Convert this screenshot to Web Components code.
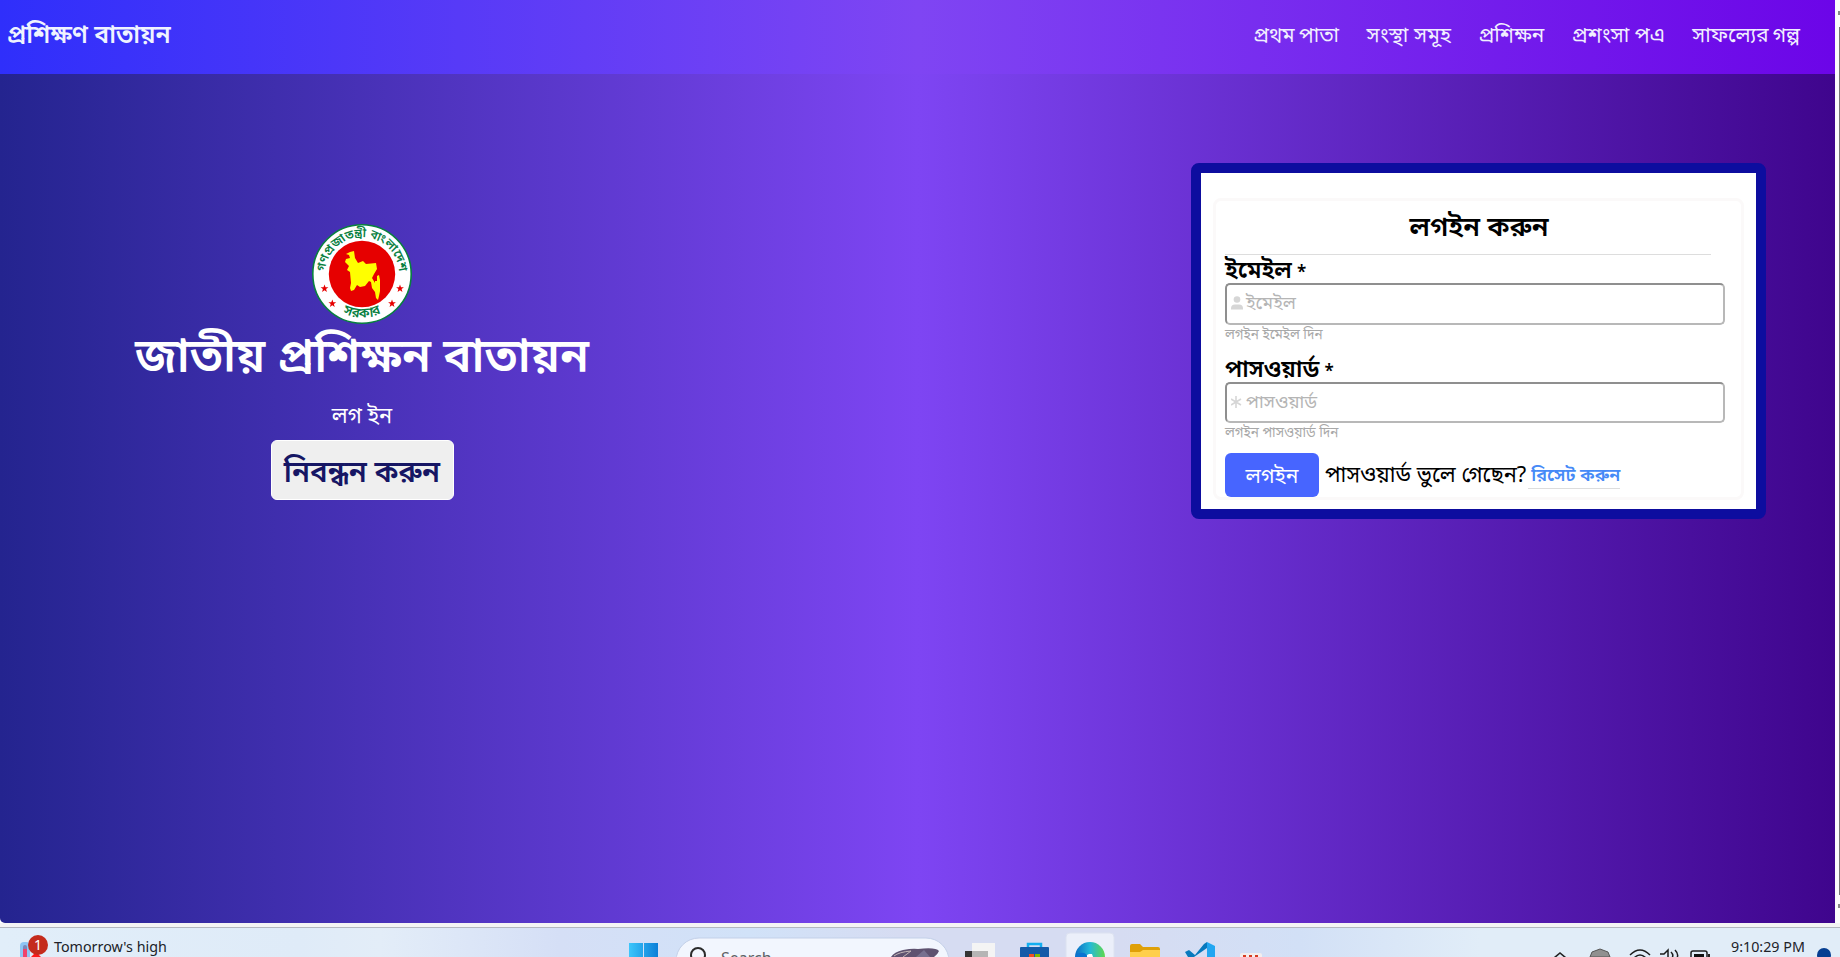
<!DOCTYPE html>
<html lang="bn"><head><meta charset="utf-8"><title>প্রশিক্ষণ বাতায়ন</title>
<style>
html,body{margin:0;height:100%;overflow:hidden}
body{font-family:"Noto Sans","Noto Sans Bengali","Open Sans",sans-serif;background:#fff}
</style></head><body>
<portal-shell>
  <portal-nav slot="nav"></portal-nav>
  <portal-hero slot="left"></portal-hero>
  <login-card slot="right"></login-card>
  <task-bar slot="taskbar"></task-bar>
</portal-shell>
<script>
function define(name, html){
  const t=document.createElement('template'); t.innerHTML=html;
  customElements.define(name, class extends HTMLElement{
    constructor(){super();this.attachShadow({mode:'open'}).append(t.content.cloneNode(true));}
  });
}

define('portal-shell', `<style>
:host{display:grid;grid-template:923px 34px / 1fr;width:1840px;height:957px;overflow:hidden}
.view{display:grid;grid-template-columns:1835px 5px;min-height:0}
.page{display:grid;grid-template-rows:74px 849px;border-bottom-left-radius:5px;overflow:hidden}
main{display:flex;justify-content:space-between;align-items:flex-start;background:linear-gradient(90deg,#24248f 0%,#7e45f3 50%,#3f058d 100%)}
.scroll{background:linear-gradient(#888,#888) 3px 11px/2px 4px no-repeat,linear-gradient(#888,#888) 3px 904px/2px 4px no-repeat,linear-gradient(#777,#777) 4px 27px/1px 868px no-repeat #fcfcfc}
</style><div class="view"><div class="page"><slot name="nav"></slot><main><slot name="left"></slot><slot name="right"></slot></main></div><div class="scroll"></div></div><slot name="taskbar"></slot>`);

define('nav-link', `<style>:host{display:block;font-size:var(--size,21px);line-height:30px;white-space:nowrap;color:#f1efff}</style><slot></slot>`);

define('portal-nav', `<style>
:host{display:flex;justify-content:space-between;height:74px;box-sizing:border-box;padding:19px 35px 0 7px;background:linear-gradient(90deg,#2f2ffb 0%,#7f45f3 50%,#6c05e8 100%)}
b{font-size:24.700px;font-weight:600;line-height:30px;color:#eff3ff;white-space:nowrap}
nav{display:flex;gap:27.500px}
.home{--size:20.500px;word-spacing:-1px}.train{--size:20.700px}.praise{--size:20.800px}.story{--size:20.700px;word-spacing:-1px}
</style><b>প্রশিক্ষণ বাতায়ন</b><nav><nav-link class="home">প্রথম পাতা</nav-link><nav-link>সংস্থা সমূহ</nav-link><nav-link class="train">প্রশিক্ষন</nav-link><nav-link class="praise">প্রশংসা পএ</nav-link><nav-link class="story">সাফল্যের গল্প</nav-link></nav>`);

define('gov-emblem', `<style>:host{display:block;width:100px;height:100px}svg{display:block;overflow:visible}text{font-family:"Noto Sans","Noto Sans Bengali",sans-serif;font-weight:600;fill:#08803f}</style>
<svg width="100" height="100" viewBox="0 0 100 100"><defs><path id="top" d="M13.200 54 A37 37 0 1 1 86.800 54"/><path id="bot" d="M22 83.300 A43.500 43.500 0 0 0 78 83.300"/></defs>
<circle cx="50" cy="50" r="49.200" fill="#fff" stroke="#08803f" stroke-width="1.600"/><circle cx="50" cy="50" r="33.200" fill="#e60000"/>
<path fill="#ff0" d="M38 28l4-1 1 7 3 5 5-2 3 3 10-1 1 6-3 5-2 4 3 5 0-2 2 0 0-5 2-1 1 5 0 11-1 5-1 4-2-2-1-6-3-4-1-6-2-1-4 5-5 1-3-2-3 5-3 1-1-3 1-5-1-11-3-2 2-4-4-4 1-3 4-1-1-3-3-1z"/>
<g fill="#e60000"><path d="M12.500 60.500l1 2.700 2.900.1-2.300 1.800.8 2.800-2.400-1.600-2.400 1.600.8-2.800-2.300-1.800 2.900-.1z"/><path d="M20.300 75.500l1 2.700 2.900.1-2.300 1.800.8 2.800-2.400-1.600-2.400 1.600.8-2.800-2.300-1.800 2.900-.1z"/><path d="M80 75.500l1 2.700 2.900.1-2.300 1.800.8 2.800-2.400-1.600-2.400 1.600.8-2.800-2.300-1.800 2.900-.1z"/><path d="M88 60.500l1 2.700 2.900.1-2.300 1.800.8 2.800-2.400-1.600-2.400 1.600.8-2.800-2.300-1.800 2.900-.1z"/></g>
<text font-size="12.200"><textPath href="#top" startOffset="50%" text-anchor="middle">গণপ্রজাতন্ত্রী বাংলাদেশ</textPath></text>
<text font-size="13.500"><textPath href="#bot" startOffset="50%" text-anchor="middle">সরকার</textPath></text></svg>`);

define('portal-hero', `<style>
:host{display:flex;flex-direction:column;align-items:center;width:724px;padding-top:150px;color:#fff;white-space:nowrap}
h1{margin:0;font-size:47.200px;font-weight:600;line-height:60px;height:60px}
p{margin:16px 0 0;font-size:21.800px;line-height:30px}
button{margin:10px 0 0;box-sizing:border-box;width:183px;height:60px;border:1px solid #fff;border-radius:6px;background:#efefef;color:#161664;font:600 29.400px/40px "Noto Sans","Noto Sans Bengali",sans-serif;padding:1px 0 0}
</style><gov-emblem></gov-emblem><h1>জাতীয় প্রশিক্ষন বাতায়ন</h1><p>লগ ইন</p><button>নিবন্ধন করুন</button>`);

define('form-field', `<style>
:host{display:block;width:500px}
label{display:block;font-weight:600;font-size:23.500px;word-spacing:-1px;line-height:28px;height:28px;color:#000;white-space:nowrap}
.box{display:flex;align-items:flex-start;box-sizing:border-box;height:var(--h,42px);border:2px solid;border-color:#8f8f8f #b8b8b8 #b8b8b8 #8f8f8f;border-radius:5px;padding:4px 0 0 4px;color:#b5b5b5;font-size:18px;line-height:26px;background:#fff}
small{display:block;font-size:13.500px;line-height:18px;height:18px;color:#a8a8a8;white-space:nowrap}
</style><label><slot name="label"></slot></label><div class="box"><slot name="icon"></slot><span><slot name="hint"></slot></span></div><small><slot></slot></small>`);

define('login-card', `<style>
:host{display:block;box-sizing:border-box;width:575px;height:356px;margin:89px 69px 0 0;border:10px solid #0d0d9f;border-radius:8px;background:#fff;padding:25px 12px 0}
.set{box-sizing:border-box;width:531px;height:302px;border:3px solid #fbf9f9;border-radius:8px;padding:0 0 0 9px}
h2{margin:0;width:486px;height:54px;box-sizing:border-box;padding:6px 0 0 22px;text-align:center;font-size:27.400px;font-weight:600;line-height:38px;border-bottom:1px solid #ddd;color:#000}
svg{display:block;margin:7px 3px 0 0}
i{font-style:normal;font-size:17px}
.row{display:flex;align-items:flex-start;white-space:nowrap;margin-top:12px}
button{width:94px;height:44px;border:0;border-radius:6px;background:#4765ff;color:#fff;font:21px/30px "Noto Sans","Noto Sans Bengali",sans-serif;padding:0}
.q{font-size:21.800px;line-height:30px;margin:6px 0 0 6px;color:#000}
a{margin:8px 0 0 2px;font-weight:600;font-size:18px;line-height:27px;color:#468af7;border-bottom:1px solid #ddd;padding-left:3px}
form-field+form-field{margin-top:11px;--h:41px}
</style><div class="set"><h2>লগইন করুন</h2>
<form-field><span slot="label">ইমেইল <i>*</i></span><svg slot="icon" width="12" height="14" fill="#d6d6d6"><circle cx="6" cy="3.500" r="3.300"/><path d="M0 13.500v-1q0-4 4-4h4q4 0 4 4v1z"/></svg><span slot="hint">ইমেইল</span>লগইন ইমেইল দিন</form-field>
<form-field><span slot="label">পাসওয়ার্ড <i>*</i></span><svg slot="icon" width="12" height="14" stroke="#d6d6d6" stroke-width="1.600"><path d="M5 1v12M0 4l10 6M0 10l10-6"/></svg><span slot="hint">পাসওয়ার্ড</span>লগইন পাসওয়ার্ড দিন</form-field>
<div class="row"><button>লগইন</button><span class="q">পাসওয়ার্ড ভুলে গেছেন?</span><a>রিসেট করুন</a></div></div>`);

define('task-bar', `<style>
:host{display:block;position:relative;height:34px;overflow:hidden;background:linear-gradient(#f4f4f4 0 4px,#b3b7bf 4px 5px,transparent 5px),linear-gradient(90deg,#e1eef9 0,#dfebf8 300px,#e3edf8 380px,#d5dff6 560px,#d1e2f8 750px,#d6dcf2 900px,#d6dcf2 1120px,#d2e0f6 1300px,#e1edf8 1480px,#e1edf8 100%)}
span,svg{position:absolute;white-space:nowrap}
svg{left:0;top:0}
span{font-family:"Noto Sans",sans-serif;color:#202228}
</style><svg width="1840" height="34"><defs><linearGradient id="w"><stop stop-color="#3cc6fb"/><stop offset="1" stop-color="#0b7fd8"/></linearGradient><linearGradient id="e"><stop stop-color="#0a6cc4"/><stop offset=".5" stop-color="#25b9d8"/><stop offset="1" stop-color="#5fd84d"/></linearGradient></defs>
<rect x="20" y="19" width="10" height="20" rx="4" fill="#8fc5f4"/><rect x="23" y="22" width="4" height="18" rx="2" fill="#7c87b8"/><rect x="23" y="26" width="4" height="10" fill="#f0436b"/><path d="M31 34l5-5 5 5z" fill="#ff1a1a"/><circle cx="38" cy="22" r="10" fill="#c42b1c"/>
<path d="M629 20h14v14h-14zM644 20h14v14h-14z" fill="url(#w)"/>
<rect x="676" y="15" width="273" height="46" rx="23" fill="#f2f6fe" stroke="#c3d0e8"/><circle cx="698" cy="32" r="7" fill="none" stroke="#2b2b2b" stroke-width="2"/>
<path d="M891 34q3-5 12-7 10-2 15-1 18-2 21 2-1 3-5 6z" fill="#5e5270"/><path d="M894 33q5-4 17-5l-8 6" fill="none" stroke="#c1b5b6"/><path d="M916 34l8-7 6 7z" fill="#77708f"/>
<rect x="965" y="28" width="23" height="6" fill="#353535"/><rect x="972" y="20" width="23" height="14" fill="#f4f4f4"/><rect x="972" y="28" width="16" height="6" fill="#b5b5b5"/>
<path d="M1028 25v-4h13v4" fill="none" stroke="#13aef0" stroke-width="2.500"/><rect x="1020" y="24" width="29" height="14" rx="1" fill="#145aa8"/><path d="M1029 31h5v3h-5z" fill="#f25022"/><path d="M1035 31h5v3h-5z" fill="#7fba00"/>
<rect x="1066" y="10" width="48" height="48" rx="4" fill="#ebeffa" stroke="#dce2f0"/><circle cx="1090" cy="34" r="15" fill="url(#e)"/><path d="M1075 34q2-5 9-4 3 1 3 4z" fill="#0b74d1"/><path d="M1087 34v-2l2-1h3l1 3z" fill="#fff"/>
<path d="M1130 34V23q0-2 2-2h8l3 3h15q2 0 2 2v8z" fill="#dfa008"/><path d="M1130 34v-5h10l3-2h17v7z" fill="#ffcf4b"/>
<path d="M1185 29l4-2 6 5 9-11 3-2v15h-19z" fill="#0879bd"/><path d="M1207 19l8 4v11h-8z" fill="#22a6f1"/><path d="M1194 34l13-9v9z" fill="#d5def5"/>
<rect x="1240" y="30" width="22" height="8" rx="2" fill="#f3eeee"/><path d="M1243 32h3v2h-3zM1249 32h3v2h-3zM1255 32h3v2h-3z" fill="#d83b20"/>
<path d="M1554 35l6-5 6 5" fill="none" stroke="#222" stroke-width="1.600"/><path d="M1590 34l2-5 8-3 8 3 2 5z" fill="#909090" stroke="#555"/>
<g fill="none" stroke="#1d1d1d" stroke-width="1.500"><path d="M1630 32q10-10 20 0M1634 35q6-6 12 0"/><path d="M1660 31h4l4-4v8M1671 29q3 3 1 6M1675 27q4 4 2 8"/><rect x="1691" y="28" width="16" height="12" rx="2"/></g><rect x="1694" y="31" width="10" height="4" fill="#111"/><path d="M1708 31h2v3h-2z" fill="#222"/>
<circle cx="1824" cy="32" r="7" fill="#053e91"/></svg>
<span style="left:34px;top:12px;color:#fff;font-size:14px;line-height:20px">1</span>
<span style="left:54px;top:14px;font-size:14.300px;line-height:20px">Tomorrow's high</span>
<span style="left:721px;top:24px;font-size:16px;line-height:22px;color:#5d6065">Search</span>
<span style="left:1731px;top:14px;font-size:14.300px;line-height:20px">9:10:29 PM</span>`);
</script></body></html>
